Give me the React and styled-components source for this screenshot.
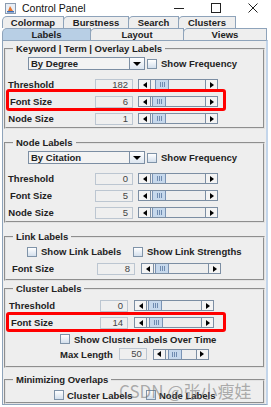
import React from 'react'
import styled, { createGlobalStyle } from 'styled-components'

const Global = createGlobalStyle`
  html, body { margin: 0; padding: 0; background: #fff; }
  body { font-family: "Liberation Sans", Arial, sans-serif; }
`

const Window = styled.div`
  position: relative;
  width: 271px;
  height: 407px;
  overflow: hidden;
  background: #fff;
  display: flex;
  flex-direction: column;
  padding-bottom: 2px;
  box-sizing: border-box;
  color: #333;
`

const TitleBar = styled.div`
  flex: none;
  height: 16px;
  display: flex;
  align-items: center;
  padding-left: 5px;
  font-size: 10.5px;
  color: #111;
`

const Caption = styled.span`
  margin-left: 6px;
  flex: 1;
`

const WinButton = styled.div`
  width: 37px;
  height: 100%;
  display: flex;
  align-items: center;
  justify-content: center;
`

const Tabs = styled.div`
  flex: none;
  padding: 0 0 0 2px;
`

const TabRow = styled.div`
  display: flex;
  height: 12px;
`

const Tab = styled.div`
  width: ${p => p.w}px;
  height: 100%;
  box-sizing: border-box;
  border: 1px solid #8ea3ba;
  border-bottom: none;
  border-top-left-radius: 5px;
  margin-right: -1px;
  background: ${p => (p.active ? '#b8cfe5' : '#eeeeee')};
  display: flex;
  align-items: center;
  justify-content: center;
  font-weight: bold;
  font-size: 9.5px;
  color: #222;
`

const Panel = styled.div`
  flex: 1;
  margin-left: 2px;
  width: 266px;
  box-sizing: border-box;
  background: #eeeeee;
  border-top: 1px solid #8ea3ba;
  border-left: 1px solid #8ea3ba;
  border-right: 2px solid #c3d5ea;
  border-bottom: 1px solid #8ea3ba;
  overflow: hidden;
`

const Group = styled.fieldset`
  margin: ${p => p.mt}px 1px 0 1px;
  padding: 0 0 ${p => p.pb || 0}px 0;
  min-width: 0;
  border: 2px groove #e2e2e2;
  legend {
    margin-left: 7px;
    padding: 0 3px;
    font-weight: bold;
    font-size: 9.5px;
    line-height: 12px;
    height: 12px;
    color: #222;
  }
`

const Row = styled.div`
  position: relative;
  display: flex;
  align-items: center;
  height: ${p => p.h || 17}px;
  padding-left: ${p => p.pl || 0}px;
  margin-top: ${p => p.mt || 0}px;
`

const Mark = styled.div`
  position: absolute;
  left: 0;
  width: 220px;
  top: ${p => p.top}px;
  bottom: ${p => p.bottom}px;
  border: 3px solid #ff0000;
  border-radius: 3px;
  box-sizing: border-box;
  pointer-events: none;
`

const Label = styled.span`
  flex: none;
  width: ${p => (p.w ? `${p.w}px` : 'auto')};
  text-align: center;
  font-weight: bold;
  font-size: 9.5px;
  color: #222;
`

const Field = styled.div`
  flex: none;
  width: ${p => p.w}px;
  height: 12px;
  margin-left: ${p => p.ml}px;
  box-sizing: border-box;
  border: 1px solid #bcc6d1;
  background: #efefef;
  text-align: right;
  padding-right: 4px;
  font-size: 9.5px;
  line-height: 10px;
  color: #444;
`

const Scroll = styled.div`
  flex: none;
  display: flex;
  width: ${p => p.w}px;
  height: 11px;
  margin-left: ${p => p.ml}px;
  box-sizing: border-box;
  border: 1px solid #7c8ea3;
  background: #eeeeee;
`

const ArrowBtn = styled.div`
  flex: none;
  width: 11px;
  display: flex;
  align-items: center;
  justify-content: center;
  background: #f4f4f4;
  border-${p => (p.right ? 'left' : 'right')}: 1px solid #7c8ea3;
  &::before {
    content: '';
    border-top: 3px solid transparent;
    border-bottom: 3px solid transparent;
    border-${p => (p.right ? 'left' : 'right')}: 4px solid #000;
  }
`

const Track = styled.div`
  flex: 1;
  display: flex;
`

const Thumb = styled.div`
  width: 14px;
  margin-left: ${p => p.at}px;
  box-sizing: border-box;
  border-left: 1px solid #7a93b4;
  border-right: 1px solid #7a93b4;
  background: #c6d8ec;
  display: flex;
  align-items: center;
  justify-content: center;
  &::after {
    content: '';
    width: 5px;
    height: 5px;
    background: repeating-linear-gradient(90deg, #6f8bb0 0 1px, transparent 1px 2px);
  }
`

const Combo = styled.div`
  flex: none;
  display: flex;
  width: 117px;
  height: 13px;
  margin-left: 22px;
  box-sizing: border-box;
  border: 1px solid #7c8ea3;
  background: #f3f3f3;
`

const ComboText = styled.span`
  flex: 1;
  padding-left: 2px;
  font-weight: bold;
  font-size: 9.5px;
  line-height: 11px;
  color: #222;
`

const ComboBtn = styled.div`
  width: 14px;
  border-left: 1px solid #7c8ea3;
  background: linear-gradient(#ffffff, #dde6f0);
  display: flex;
  align-items: center;
  justify-content: center;
  &::before {
    content: '';
    border-left: 4px solid transparent;
    border-right: 4px solid transparent;
    border-top: 4px solid #000;
  }
`

const Check = styled.label`
  flex: none;
  display: flex;
  align-items: center;
  width: ${p => (p.w ? `${p.w}px` : 'auto')};
  margin-left: ${p => p.ml || 0}px;
  font-weight: bold;
  font-size: 9.5px;
  color: #222;
`

const CheckBox = styled.span`
  flex: none;
  width: 10px;
  height: 10px;
  margin-right: ${p => p.gap || 4}px;
  box-sizing: border-box;
  border: 1px solid #7f93a8;
  background: linear-gradient(#ffffff, #d3dfec);
`

const Watermark = styled.div`
  position: absolute;
  left: 119px;
  top: 378px;
  font-family: "Noto Sans CJK SC", "Liberation Sans", sans-serif;
  font-size: 17px;
  color: rgba(110, 110, 110, 0.55);
  pointer-events: none;
  white-space: nowrap;
`

const Slider = ({ w = 80, ml = 5, at = 1 }) => (
  <Scroll w={w} ml={ml}>
    <ArrowBtn />
    <Track>
      <Thumb at={at} />
    </Track>
    <ArrowBtn right />
  </Scroll>
)

const Setting = ({ label, value, lw = 50, fml = 39, fw = 38, sml = 5, sw = 80, at = 1, mark }) => (
  <Row>
    {mark && <Mark top={mark[0]} bottom={mark[1]} />}
    <Label w={lw}>{label}</Label>
    <Field w={fw} ml={fml}>{value}</Field>
    <Slider w={sw} ml={sml} at={at} />
  </Row>
)

const ComboRow = ({ text }) => (
  <Row h={13} mt={2}>
    <Combo>
      <ComboText>{text}</ComboText>
      <ComboBtn />
    </Combo>
    <Check ml={2}>
      <CheckBox />
      Show Frequency
    </Check>
  </Row>
)

const AppIcon = () => (
  <svg width="11" height="11" viewBox="0 0 11 11">
    <rect x="0.5" y="0.5" width="10" height="10" fill="#e9eef5" stroke="#8a9bb0" />
    <path d="M3 8 L5 3 L8 8 Z" fill="#e8772e" />
    <rect x="2" y="8" width="7" height="1.5" fill="#3f6fb5" />
  </svg>
)

export default function App() {
  return (
    <>
      <Global />
      <Window>
        <TitleBar>
          <AppIcon />
          <Caption>Control Panel</Caption>
          <WinButton>
            <svg width="10" height="10"><path d="M0 5.5 H10" stroke="#222" /></svg>
          </WinButton>
          <WinButton>
            <svg width="10" height="10"><rect x="0.5" y="0.5" width="9" height="9" fill="none" stroke="#222" /></svg>
          </WinButton>
          <WinButton>
            <svg width="10" height="10"><path d="M0.5 0.5 L9.5 9.5 M9.5 0.5 L0.5 9.5" stroke="#222" /></svg>
          </WinButton>
        </TitleBar>

        <Tabs>
          <TabRow>
            <Tab w={62}>Colormap</Tab>
            <Tab w={66}>Burstness</Tab>
            <Tab w={51}>Search</Tab>
            <Tab w={58}>Clusters</Tab>
          </TabRow>
          <TabRow>
            <Tab w={89} active>Labels</Tab>
            <Tab w={94}>Layout</Tab>
            <Tab w={84}>Views</Tab>
          </TabRow>
        </Tabs>

        <Panel>
          <Group mt={2}>
            <legend>Keyword | Term | Overlay Labels</legend>
            <ComboRow text="By Degree" />
            <Row h={6} />
            <Setting label="Threshold" value="182" at={4} />
            <Setting label="Font Size" value="6" mark={[-4, -1]} />
            <Setting label="Node Size" value="1" />
          </Group>

          <Group mt={8}>
            <legend>Node Labels</legend>
            <ComboRow text="By Citation" />
            <Row h={6} />
            <Setting label="Threshold" value="0" />
            <Setting label="Font Size" value="5" />
            <Setting label="Node Size" value="5" />
          </Group>

          <Group mt={8} pb={2}>
            <legend>Link Labels</legend>
            <Row>
              <Check w={106} ml={21}>
                <CheckBox />
                Show Link Labels
              </Check>
              <Check>
                <CheckBox />
                Show Link Strengths
              </Check>
            </Row>
            <Setting label="Font Size" value="8" lw={54} fml={37} sml={6} />
          </Group>

          <Group mt={2} pb={5}>
            <legend>Cluster Labels</legend>
            <Row h={2} />
            <Setting label="Threshold" value="0" lw={52} fml={42} fw={28} sml={6} />
            <Setting label="Font Size" value="14" lw={52} fml={42} fw={28} sml={6} at={2} mark={[-2, -1]} />
            <Row h={16}>
              <Check ml={54}>
                <CheckBox />
                Show Cluster Labels Over Time
              </Check>
            </Row>
            <Row h={14} pl={54}>
              <Label>Max Length</Label>
              <Field w={28} ml={6}>50</Field>
              <Slider w={56} ml={6} at={2} />
            </Row>
          </Group>

          <Group mt={6}>
            <legend>Minimizing Overlaps</legend>
            <Row h={14} mt={2}>
              <Check w={92} ml={48}>
                <CheckBox gap={3} />
                Cluster Labels
              </Check>
              <Check>
                <CheckBox gap={3} />
                Node Labels
              </Check>
            </Row>
          </Group>
        </Panel>

        <Watermark>CSDN @张小瘦娃</Watermark>
      </Window>
    </>
  )
}
